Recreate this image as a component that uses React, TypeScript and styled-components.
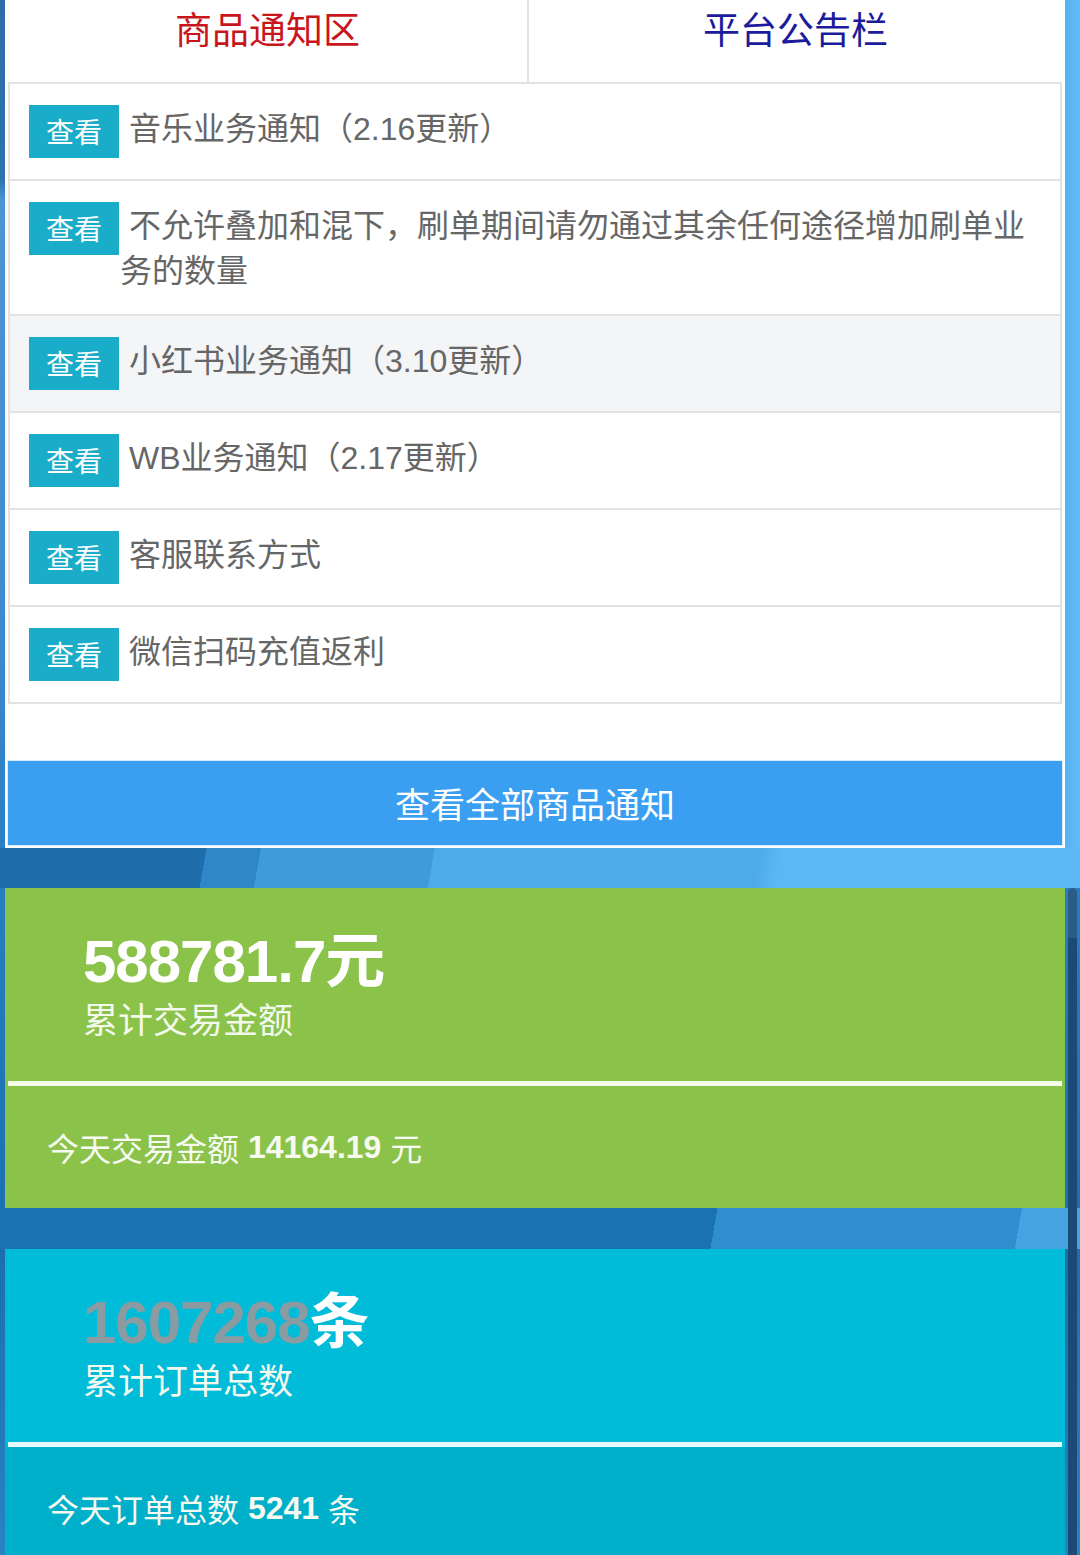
import styled, { createGlobalStyle } from 'styled-components'

const GlobalStyle = createGlobalStyle`
    html, body {
        margin: 0;
        padding: 0;
    }
    body {
        font-family: "Liberation Sans", "Noto Sans CJK SC", sans-serif;
        background-color: #4aa6e6;
        background-image:
            linear-gradient(100deg, #1f6eab 0 19%, #2f86c8 19% 24%, #3f9bdb 24% 40%, #4eabea 40% 70%, #5db7f4 72% 100%),
            linear-gradient(100deg, #1a72b2 0 66%, #2e8ed0 66% 94%, #45a3e2 94% 100%),
            linear-gradient(90deg, transparent 0 1062px, #56b2f1 1065px, #63bcf8 1080px),
            linear-gradient(180deg, #2c6dab 0px, #2f72b0 180px, #4d95d4 200px, #3f8cd0 600px, #2a7fc4 848px, #1b6fae 1250px, #2a85c8 1600px);
        background-size: 100% 40px, 100% 41px, 100% 888px, 100% 100%;
        background-position: 0 848px, 0 1208px, 0 0, 0 0;
        background-repeat: no-repeat;
    }
`

interface NoticeItem {
    text: string
    shaded?: boolean
}

const notices: NoticeItem[] = [
    { text: '音乐业务通知（2.16更新）' },
    { text: '不允许叠加和混下，刷单期间请勿通过其余任何途径增加刷单业务的数量' },
    { text: '小红书业务通知（3.10更新）', shaded: true },
    { text: 'WB业务通知（2.17更新）' },
    { text: '客服联系方式' },
    { text: '微信扫码充值返利' },
]

const App = () => {
    return (
        <>
            <GlobalStyle />
            <Page>
                <Panel>
                    <Tabs>
                        <Tab $color="#c9151c" $divider>商品通知区</Tab>
                        <Tab $color="#1b1b9c">平台公告栏</Tab>
                    </Tabs>
                    {notices.map((item) => (
                        <Row key={item.text} $shaded={item.shaded}>
                            <Badge>查看</Badge>
                            <ItemText>{item.text}</ItemText>
                        </Row>
                    ))}
                    <AllButton>查看全部商品通知</AllButton>
                </Panel>

                {/*trade amount*/}
                <StatCard $bg="#8bc34a" $footBg="#8bc34a">
                    <StatTop>
                        <BigValue>
                            <BigNum>588781.7</BigNum>元
                        </BigValue>
                        <StatLabel>累计交易金额</StatLabel>
                    </StatTop>
                    <Divider $color="#f3fbe6" />
                    <StatFoot>
                        今天交易金额 <b>14164.19</b> 元
                    </StatFoot>
                </StatCard>

                {/*order count*/}
                <StatCard $bg="#00bcd9" $footBg="#00afc9">
                    <StatTop>
                        <BigValue>
                            <BigNum $muted>1607268</BigNum>条
                        </BigValue>
                        <StatLabel>累计订单总数</StatLabel>
                    </StatTop>
                    <Divider $color="#e6fbff" />
                    <StatFoot>
                        今天订单总数 <b>5241</b> 条
                    </StatFoot>
                </StatCard>

                <ScrollThumb />
            </Page>
        </>
    )
}

export default App

const Page = styled.div`
    position: relative;
    width: 1060px;
    padding: 0 15px 0 5px;
`

const Panel = styled.div`
    background: #ffffff;
    padding: 0 3px 3px 3px;
    margin-bottom: 40px;
`

const Tabs = styled.div`
    display: grid;
    grid-template-columns: 521px 1fr;
`

const Tab = styled.div<{ $color: string; $divider?: boolean }>`
    font-family: "Noto Sans CJK SC", sans-serif;
    font-size: 37px;
    line-height: 56px;
    height: 56px;
    padding-bottom: 26px;
    text-align: center;
    color: ${props => props.$color};
    border-bottom: 2px solid #e2e2e2;
    border-right: ${props => props.$divider ? '2px solid #e2e2e2' : 'none'};
`

const Row = styled.div<{ $shaded?: boolean }>`
    display: flex;
    align-items: flex-start;
    padding: 21px 20px 20px 19px;
    border: 2px solid #e2e2e2;
    border-top: none;
    background: ${props => props.$shaded ? '#f4f5f6' : '#ffffff'};
`

const Badge = styled.span`
    flex: 0 0 90px;
    height: 53px;
    line-height: 53px;
    margin-bottom: 1px;
    text-align: center;
    background: #1aadc9;
    color: #ffffff;
    font-family: "Noto Sans CJK SC", sans-serif;
    font-size: 28px;
`

const ItemText = styled.div`
    flex: 1;
    margin: 2px 0 0 1px;
    text-indent: 9px;
    font-size: 32px;
    line-height: 45px;
    color: #666666;
`

const AllButton = styled.div`
    margin-top: 57px;
    height: 84px;
    line-height: 84px;
    text-align: center;
    background: #3a9ef1;
    color: #ffffff;
    font-family: "Noto Sans CJK SC", sans-serif;
    font-size: 35px;
    box-shadow: 0 0 0 1px #d8ecfb;
`

const StatCard = styled.div<{ $bg: string; $footBg: string }>`
    height: 320px;
    margin-bottom: 41px;
    background: linear-gradient(${props => props.$bg} 0 198px, ${props => props.$footBg} 198px);
    color: #ffffff;
    display: flex;
    flex-direction: column;
`

const StatTop = styled.div`
    height: 155px;
    padding: 38px 0 0 78px;
`

const BigValue = styled.div`
    font-size: 60px;
    line-height: 72px;
    font-weight: 700;
    letter-spacing: -1px;
`

const BigNum = styled.span<{ $muted?: boolean }>`
    color: ${props => props.$muted ? '#8a9ba2' : '#ffffff'};
`

const StatLabel = styled.div`
    font-size: 35px;
    line-height: 46px;
    color: #f4f9ee;
`

const Divider = styled.div<{ $color: string }>`
    height: 5px;
    margin: 0 3px;
    background: ${props => props.$color};
`

const StatFoot = styled.div`
    flex: 1;
    display: flex;
    align-items: center;
    padding-left: 42px;
    white-space: pre;
    font-size: 32px;
    color: #f6faf1;

    b {
        font-weight: 700;
    }
`

const ScrollThumb = styled.div`
    position: absolute;
    top: 888px;
    left: 1068px;
    width: 9px;
    height: 700px;
    border-radius: 5px;
    background: linear-gradient(#2a5c88 0 50px, #1b4a76 50px);
`
